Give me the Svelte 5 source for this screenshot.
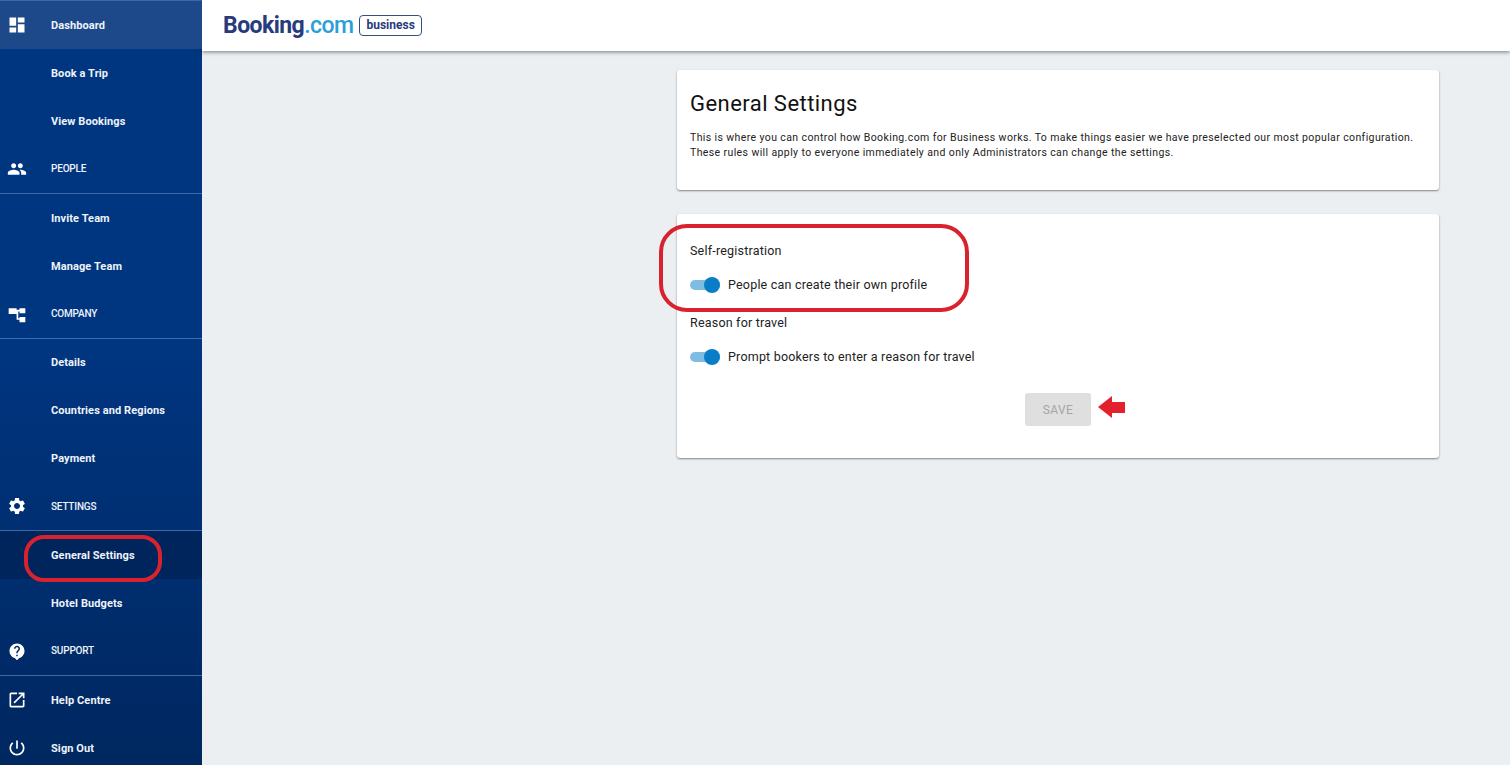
<script lang="ts">
  type NavRow = { label: string; kind: 'item' | 'section'; icon?: string; active?: boolean; current?: boolean };

  const icons: Record<string, string> = {
    dashboard: 'M3 13h8V3H3v10zm0 8h8v-6H3v6zm10 0h8V11h-8v10zm0-18v6h8V3h-8z',
    people:
      'M16 11c1.66 0 2.99-1.34 2.99-3S17.66 5 16 5c-1.66 0-3 1.34-3 3s1.34 3 3 3zm-8 0c1.66 0 2.99-1.34 2.99-3S9.66 5 8 5C6.34 5 5 6.34 5 8s1.34 3 3 3zm0 2c-2.33 0-7 1.17-7 3.5V19h14v-2.5c0-2.33-4.67-3.5-7-3.5zm8 0c-.29 0-.62.02-.97.05 1.16.84 1.97 1.97 1.97 3.45V19h6v-2.5c0-2.33-4.67-3.5-7-3.5z',
    company: 'M2 5h9.5v2H15V5h7v6h-7V9h-1.5v8H15v-1.5h7V22h-7v-3h-3.5V12H2z',
    settings:
      'M19.14 12.94c.04-.3.06-.61.06-.94 0-.32-.02-.64-.07-.94l2.03-1.58c.18-.14.23-.41.12-.61l-1.92-3.32c-.12-.22-.37-.29-.59-.22l-2.39.96c-.5-.38-1.03-.7-1.62-.94l-.36-2.54c-.04-.24-.24-.41-.48-.41h-3.84c-.24 0-.43.17-.47.41l-.36 2.54c-.59.24-1.13.57-1.62.94l-2.39-.96c-.22-.08-.47 0-.59.22L2.74 8.87c-.12.21-.08.47.12.61l2.03 1.58c-.05.3-.09.63-.09.94s.02.64.07.94l-2.03 1.58c-.18.14-.23.41-.12.61l1.92 3.32c.12.22.37.29.59.22l2.39-.96c.5.38 1.03.7 1.62.94l.36 2.54c.05.24.24.41.48.41h3.84c.24 0 .44-.17.47-.41l.36-2.54c.59-.24 1.13-.56 1.62-.94l2.39.96c.22.08.47 0 .59-.22l1.92-3.32c.12-.22.07-.47-.12-.61l-2.01-1.58zM12 15.6c-1.98 0-3.6-1.62-3.6-3.6s1.62-3.6 3.6-3.6 3.6 1.62 3.6 3.6-1.62 3.6-3.6 3.6z',
    support:
      'M12 2C6.48 2 2 6.48 2 12c0 4.6 3.1 8.5 7.4 9.6L12 24.5l2.6-2.9C18.9 20.5 22 16.6 22 12c0-5.52-4.48-10-10-10zm1 17h-2v-2h2v2zm2.07-7.75l-.9.92C13.45 12.9 13 13.5 13 15h-2v-.5c0-1.1.45-2.1 1.17-2.83l1.24-1.26c.37-.36.59-.86.59-1.41 0-1.1-.9-2-2-2s-2 .9-2 2H8c0-2.21 1.79-4 4-4s4 1.79 4 4c0 .88-.36 1.68-.93 2.25z',
    external:
      'M19 19H5V5h7V3H5c-1.11 0-2 .9-2 2v14c0 1.1.89 2 2 2h14c1.1 0 2-.9 2-2v-7h-2v7zM14 3v2h3.59l-9.83 9.83 1.41 1.41L19 6.41V10h2V3h-7z',
    power:
      'M13 3h-2v10h2V3zm4.83 2.17l-1.42 1.42C17.99 7.86 19 9.81 19 12c0 3.87-3.13 7-7 7s-7-3.13-7-7c0-2.19 1.01-4.14 2.58-5.42L6.17 5.17C4.23 6.82 3 9.26 3 12c0 4.97 4.03 9 9 9s9-4.03 9-9c0-2.74-1.23-5.18-3.17-6.83z'
  };

  const nav: NavRow[] = [
    { label: 'Dashboard', kind: 'item', icon: 'dashboard', active: true },
    { label: 'Book a Trip', kind: 'item' },
    { label: 'View Bookings', kind: 'item' },
    { label: 'PEOPLE', kind: 'section', icon: 'people' },
    { label: 'Invite Team', kind: 'item' },
    { label: 'Manage Team', kind: 'item' },
    { label: 'COMPANY', kind: 'section', icon: 'company' },
    { label: 'Details', kind: 'item' },
    { label: 'Countries and Regions', kind: 'item' },
    { label: 'Payment', kind: 'item' },
    { label: 'SETTINGS', kind: 'section', icon: 'settings' },
    { label: 'General Settings', kind: 'item', current: true },
    { label: 'Hotel Budgets', kind: 'item' },
    { label: 'SUPPORT', kind: 'section', icon: 'support' },
    { label: 'Help Centre', kind: 'item', icon: 'external' },
    { label: 'Sign Out', kind: 'item', icon: 'power' }
  ];

  const toggles = [
    { title: 'Self-registration', text: 'People can create their own profile' },
    { title: 'Reason for travel', text: 'Prompt bookers to enter a reason for travel' }
  ];
</script>

<div class="page">
  <aside class="sidebar">
    {#each nav as row}
      <a class="row {row.kind}" class:active={row.active} class:current={row.current} href="#top">
        <span class="icon">
          {#if row.icon}
            <svg viewBox="0 0 24 24" width={row.icon === 'support' ? 18 : 20} height={row.icon === 'support' ? 18 : 20} fill="currentColor"><path d={icons[row.icon]} /></svg>
          {/if}
        </span>
        <span class="label">{row.label}</span>
        {#if row.current}<span class="oval side-oval"></span>{/if}
      </a>
    {/each}
  </aside>

  <div class="content">
    <header class="topbar">
      <div class="logo">
        <span class="word">Booking<span class="dotcom">.com</span></span>
        <span class="badge">business</span>
      </div>
    </header>

    <main class="main">
      <section class="card intro">
        <h1>General Settings</h1>
        <p>
          This is where you can control how Booking.com for Business works. To make things easier we have preselected our most popular configuration.<br />
          These rules will apply to everyone immediately and only Administrators can change the settings.
        </p>
      </section>

      <section class="card settings">
        <span class="oval form-oval"></span>
        {#each toggles as t}
          <div class="setting">
            <div class="title">{t.title}</div>
            <div class="toggle-line">
              <span class="switch"><span class="knob"></span></span>
              <span>{t.text}</span>
            </div>
          </div>
        {/each}
        <div class="actions">
          <button class="save" disabled>SAVE</button>
          <svg class="arrow" viewBox="0 0 27 22" width="27" height="22"><path d="M0 11 14 0v6h13v11H14v5z" fill="#e3212d" /></svg>
        </div>
      </section>
    </main>
  </div>
</div>

<style>
  :global(body) {
    margin: 0;
    background: #ebeff2;
    overflow: hidden;
  }

  .page {
    display: flex;
    height: 765px;
    overflow: hidden;
    font-family: Roboto, "Liberation Sans", sans-serif;
  }

  .sidebar {
    flex: 0 0 202px;
    width: 202px;
    height: 772px;
    box-sizing: border-box;
    border-top: 1px solid #3f68a8;
    background: linear-gradient(180deg, #003580 0%, #003580 45%, #00275f 100%);
  }

  .row {
    position: relative;
    display: flex;
    align-items: center;
    height: 48px;
    color: #eef3fa;
    font-size: 11px;
    font-weight: 700;
    letter-spacing: 0.1px;
    text-decoration: none;
  }

  .row.section {
    height: 48.75px;
    box-sizing: border-box;
    border-bottom: 1px solid #3f68a8;
    font-size: 10px;
    font-weight: 500;
    letter-spacing: -0.2px;
  }

  /* the source rows are not a whole number of pixels tall */
  .row.section:nth-child(4) {
    height: 49px;
  }

  .row.section:nth-child(7) {
    height: 48.5px;
  }

  .row.section .label {
    margin-top: -1px;
  }

  .row.section:nth-child(11) .label {
    margin-top: 1px;
  }

  .row.active {
    background: #1d4889;
  }

  .row.current {
    background: #00255c;
  }

  .icon {
    display: flex;
    justify-content: center;
    width: 33px;
    margin-right: 18px;
    color: #fff;
  }

  .oval {
    position: absolute;
    box-sizing: border-box;
    border: 4px solid #d8232f;
    pointer-events: none;
  }

  .side-oval {
    left: 24px;
    top: 4px;
    width: 138px;
    height: 47px;
    border-radius: 20px;
  }

  .content {
    flex: 1;
    min-width: 0;
  }

  .topbar {
    display: flex;
    align-items: center;
    height: 51px;
    padding-left: 21px;
    background: #fff;
    box-shadow: 0 1px 4px rgba(0, 0, 0, 0.5);
  }

  .logo {
    display: flex;
    align-items: center;
    gap: 6px;
  }

  .word {
    color: #273b7d;
    font-size: 23px;
    font-weight: 700;
    letter-spacing: -0.55px;
  }

  .dotcom {
    color: #2a9fd8;
    font-weight: 500;
  }

  .badge {
    padding: 2px 6px 2px;
    border: 1.5px solid #35507f;
    border-radius: 4px;
    color: #273b7d;
    font-size: 12px;
    font-weight: 700;
    line-height: 15px;
  }

  .main {
    display: flex;
    flex-direction: column;
    gap: 24px;
    width: 762px;
    margin-left: 475px;
    padding-top: 19px;
  }

  .card {
    position: relative;
    box-sizing: border-box;
    padding: 0 13px;
    background: #fff;
    border-radius: 3px;
    box-shadow: 0 1px 2px rgba(0, 0, 0, 0.45);
  }

  .intro {
    height: 120px;
    padding-top: 20px;
  }

  h1 {
    margin: 0 0 12px;
    color: #111;
    font-size: 22px;
    font-weight: 400;
    line-height: 28px;
    letter-spacing: 0.45px;
  }

  p {
    margin: 0;
    color: #222;
    font-size: 10.5px;
    line-height: 15px;
    letter-spacing: 0.39px;
  }

  .settings {
    height: 244px;
    padding-top: 28px;
  }

  .form-oval {
    left: -18px;
    top: 10px;
    width: 310px;
    height: 88px;
    border-radius: 28px;
  }

  .setting {
    height: 72px;
    color: #222;
    font-size: 12.5px;
    letter-spacing: 0.2px;
  }

  .title {
    line-height: 18px;
  }

  .toggle-line {
    display: flex;
    align-items: center;
    gap: 8px;
    margin-top: 16px;
    line-height: 18px;
  }

  .switch {
    position: relative;
    width: 30px;
    height: 10px;
    border-radius: 5px;
    background: #7fbce3;
  }

  .knob {
    position: absolute;
    right: 0;
    top: -3px;
    width: 16px;
    height: 16px;
    border-radius: 50%;
    background: #0a7dc9;
  }

  .actions {
    display: flex;
    align-items: center;
    gap: 7px;
    margin-top: 7px;
    padding-left: 335px;
  }

  .arrow {
    margin-bottom: 5px;
  }

  .save {
    width: 66px;
    height: 33px;
    border: 0;
    border-radius: 3px;
    background: #dfdfdf;
    color: #a6a6a6;
    font-family: inherit;
    font-size: 12px;
    letter-spacing: 0.4px;
  }
</style>
